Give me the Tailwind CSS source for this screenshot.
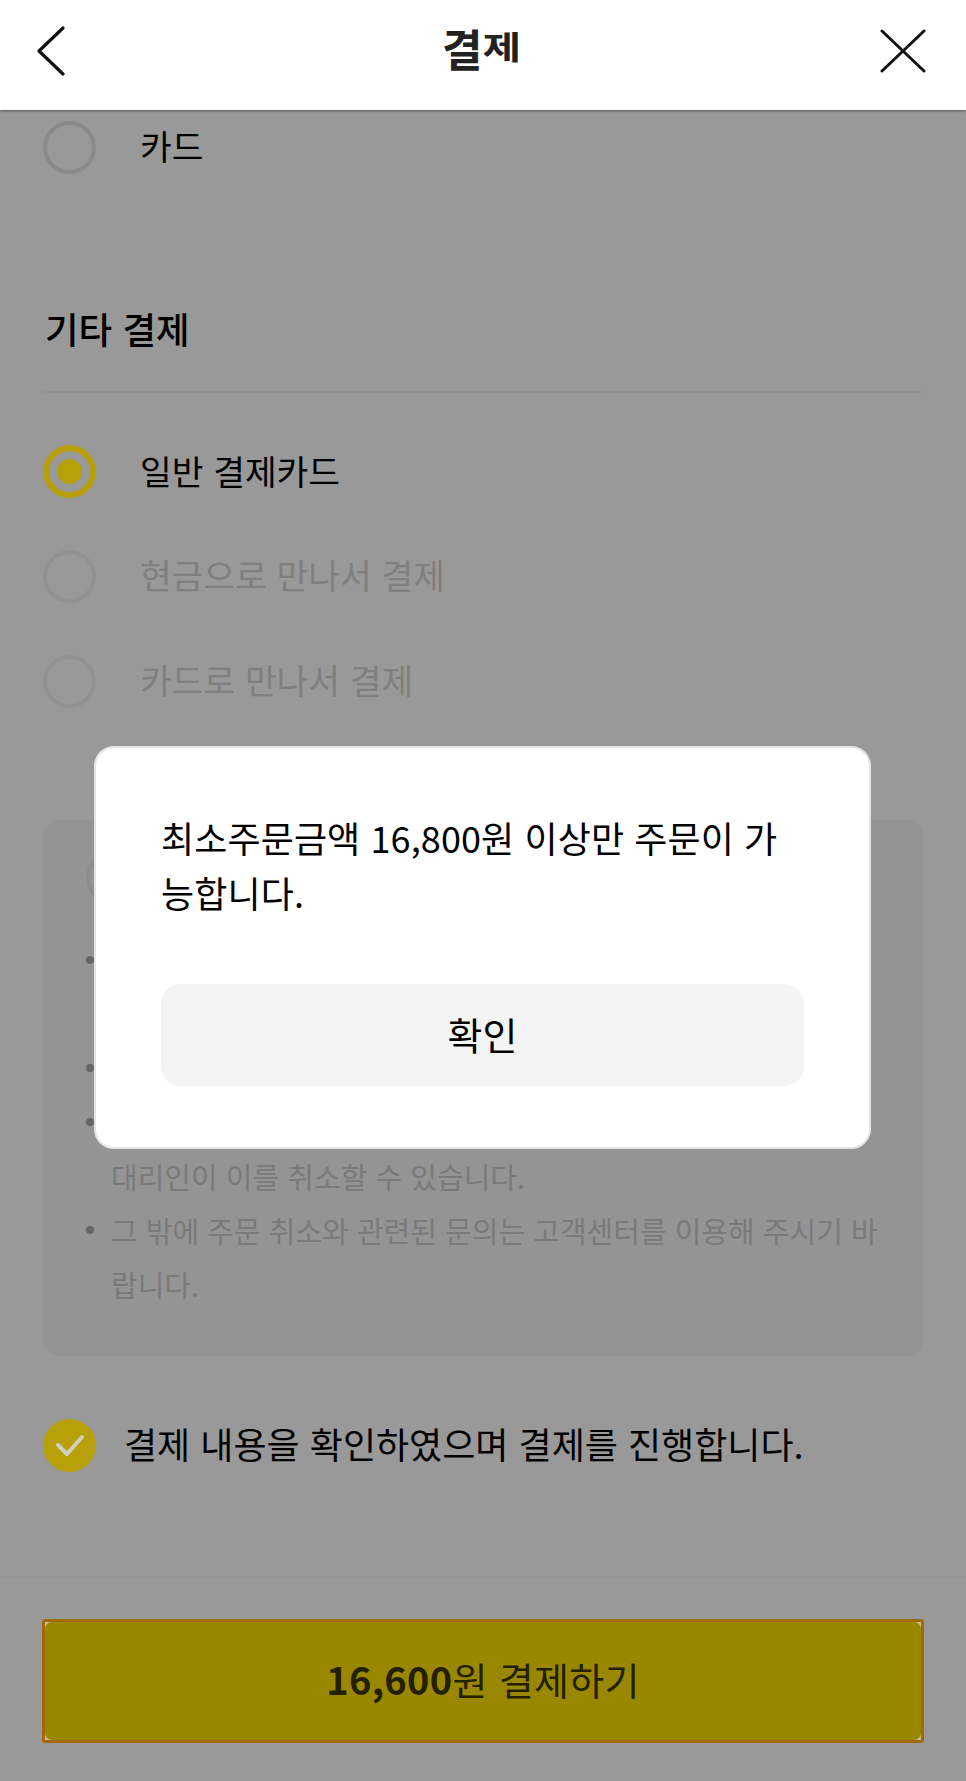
<!DOCTYPE html>
<html lang="ko">
<head>
  <meta charset="UTF-8" />
  <meta name="viewport" content="width=device-width, initial-scale=1.0"/>
  <title>결제</title>
  <script src="https://cdn.jsdelivr.net/npm/@tailwindcss/browser@4"></script>
</head>
<body class="font-['Noto_Sans_CJK_KR','Noto_Sans',sans-serif] text-black bg-[#999999]">
<div class="relative w-[966px] h-[1781px] overflow-hidden flex flex-col">

  <!-- header -->
  <header class="relative z-20 h-[110px] shrink-0 bg-white flex items-center justify-between pl-[37px] pr-[40px] pb-[9px] shadow-[0_1px_2px_rgba(0,0,0,0.45)]">
    <div class="w-[46px]">
      <svg class="w-[28px] h-[50px]" viewBox="0 0 28 50" fill="none" stroke="#111" stroke-width="3.2" stroke-linecap="round" stroke-linejoin="round"><path d="M26 2 2 25l24 23"/></svg>
    </div>
    <h1 class="flex items-start font-bold text-[#222] leading-none -mt-[6px]">
      <span class="text-[44px]">결</span><span class="text-[42px] scale-y-75 -mt-[2px]">제</span>
    </h1>
    <svg class="w-[46px] h-[44px]" viewBox="0 0 46 44" fill="none" stroke="#111" stroke-width="3" stroke-linecap="round"><path d="M2 2 44 42M44 2 2 42"/></svg>
  </header>

  <main class="flex-1 flex flex-col px-[43px] text-[34.5px] leading-[50px]">
    <div class="flex items-center gap-[44px] h-[53px] mt-[11px]">
      <span class="w-[53px] h-[53px] rounded-full border-[4px] border-[#8a8a8a]"></span>
      <span class="-mt-[6px]">카드</span>
    </div>

    <h2 class="mt-[130px] text-[36.5px] font-medium leading-[50px] pl-[2px]">기타 결제</h2>
    <div class="mt-[37px] h-[2px] bg-[#929292]"></div>

    <div class="mt-[52px] flex flex-col gap-[52px]">
      <div class="flex items-center gap-[44px] h-[53px]">
        <span class="w-[53px] h-[53px] rounded-full border-[6px] border-[#b8a00a] flex items-center justify-center"><span class="w-[25px] h-[25px] rounded-full bg-[#b8a00a]"></span></span>
        <span class="-mt-[4px]">일반 결제카드</span>
      </div>
      <div class="flex items-center gap-[44px] h-[53px]">
        <span class="w-[53px] h-[53px] rounded-full border-[4px] border-[#919191]"></span>
        <span class="-mt-[5px] text-[#7f7f7f]">현금으로 만나서 결제</span>
      </div>
      <div class="flex items-center gap-[44px] h-[53px]">
        <span class="w-[53px] h-[53px] rounded-full border-[4px] border-[#919191]"></span>
        <span class="-mt-[6px] text-[#7f7f7f]">카드로 만나서 결제</span>
      </div>
    </div>

    <section class="mt-[112px] h-[536px] shrink-0 rounded-[16px] bg-[#949494] px-[43px] text-[29px] leading-[54px] text-[#7a7a7a] whitespace-nowrap">
      <span class="block w-[53px] h-[53px] translate-y-[31px] rounded-full border-[4px] border-[#8c8c8c]"></span>
      <ul class="mt-[60px]">
        <li class="relative pl-[25px] h-[108px] before:absolute before:left-0 before:top-[23px] before:w-[8px] before:h-[8px] before:rounded-full before:bg-[#666]"></li>
        <li class="relative pl-[25px] h-[54px] before:absolute before:left-0 before:top-[23px] before:w-[8px] before:h-[8px] before:rounded-full before:bg-[#666]"></li>
        <li class="relative pl-[25px] before:absolute before:left-0 before:top-[23px] before:w-[8px] before:h-[8px] before:rounded-full before:bg-[#666]"><br>대리인이 이를 취소할 수 있습니다.</li>
        <li class="relative pl-[25px] before:absolute before:left-0 before:top-[23px] before:w-[8px] before:h-[8px] before:rounded-full before:bg-[#666]">그 밖에 주문 취소와 관련된 문의는 고객센터를 이용해 주시기 바<br>랍니다.</li>
      </ul>
    </section>

    <label class="mt-[62px] flex items-center gap-[28px] h-[54px]">
      <span class="w-[53px] h-[53px] rounded-full bg-[#b8a00a] flex items-center justify-center">
        <svg class="w-[30px] h-[24px]" viewBox="0 0 30 24" fill="none" stroke="#d0d0c0" stroke-width="4" stroke-linecap="round" stroke-linejoin="round"><path d="M3 12l9 9L27 4"/></svg>
      </span>
      <span class="-mt-[4px] text-[36px]">결제 내용을 확인하였으며 결제를 진행합니다.</span>
    </label>
  </main>

  <footer class="h-[205px] shrink-0 border-t-[2px] border-[#939393] px-[42px] pt-[41px]">
    <button class="w-full h-[124px] rounded-[3px] bg-[#c8c090] border-[3px] border-[#a2690a] text-[38px] tracking-[0.3px] text-[#231f00]">
      <span class="w-full h-full rounded-[7px] bg-[#998700] flex items-center justify-center">
        <span class="-mt-[6px]"><b class="font-bold">16,600</b>원 결제하기</span>
      </span>
    </button>
  </footer>

  <!-- alert -->
  <div class="absolute z-10 left-[94px] top-[746px] w-[777px] h-[403px] rounded-[20px] bg-white border-[2px] border-[#e4e4e4] px-[65px] pt-[62px]">
    <p class="text-[36px] tracking-[0.1px] leading-[55px] text-black break-all">최소주문금액 16,800원 이상만 주문이 가능합니다.</p>
    <button class="mt-[64px] w-full h-[102px] rounded-[20px] bg-[#f4f4f4] text-[38px] text-black"><span class="block -mt-[4px]">확인</span></button>
  </div>
</div>
</body>
</html>
